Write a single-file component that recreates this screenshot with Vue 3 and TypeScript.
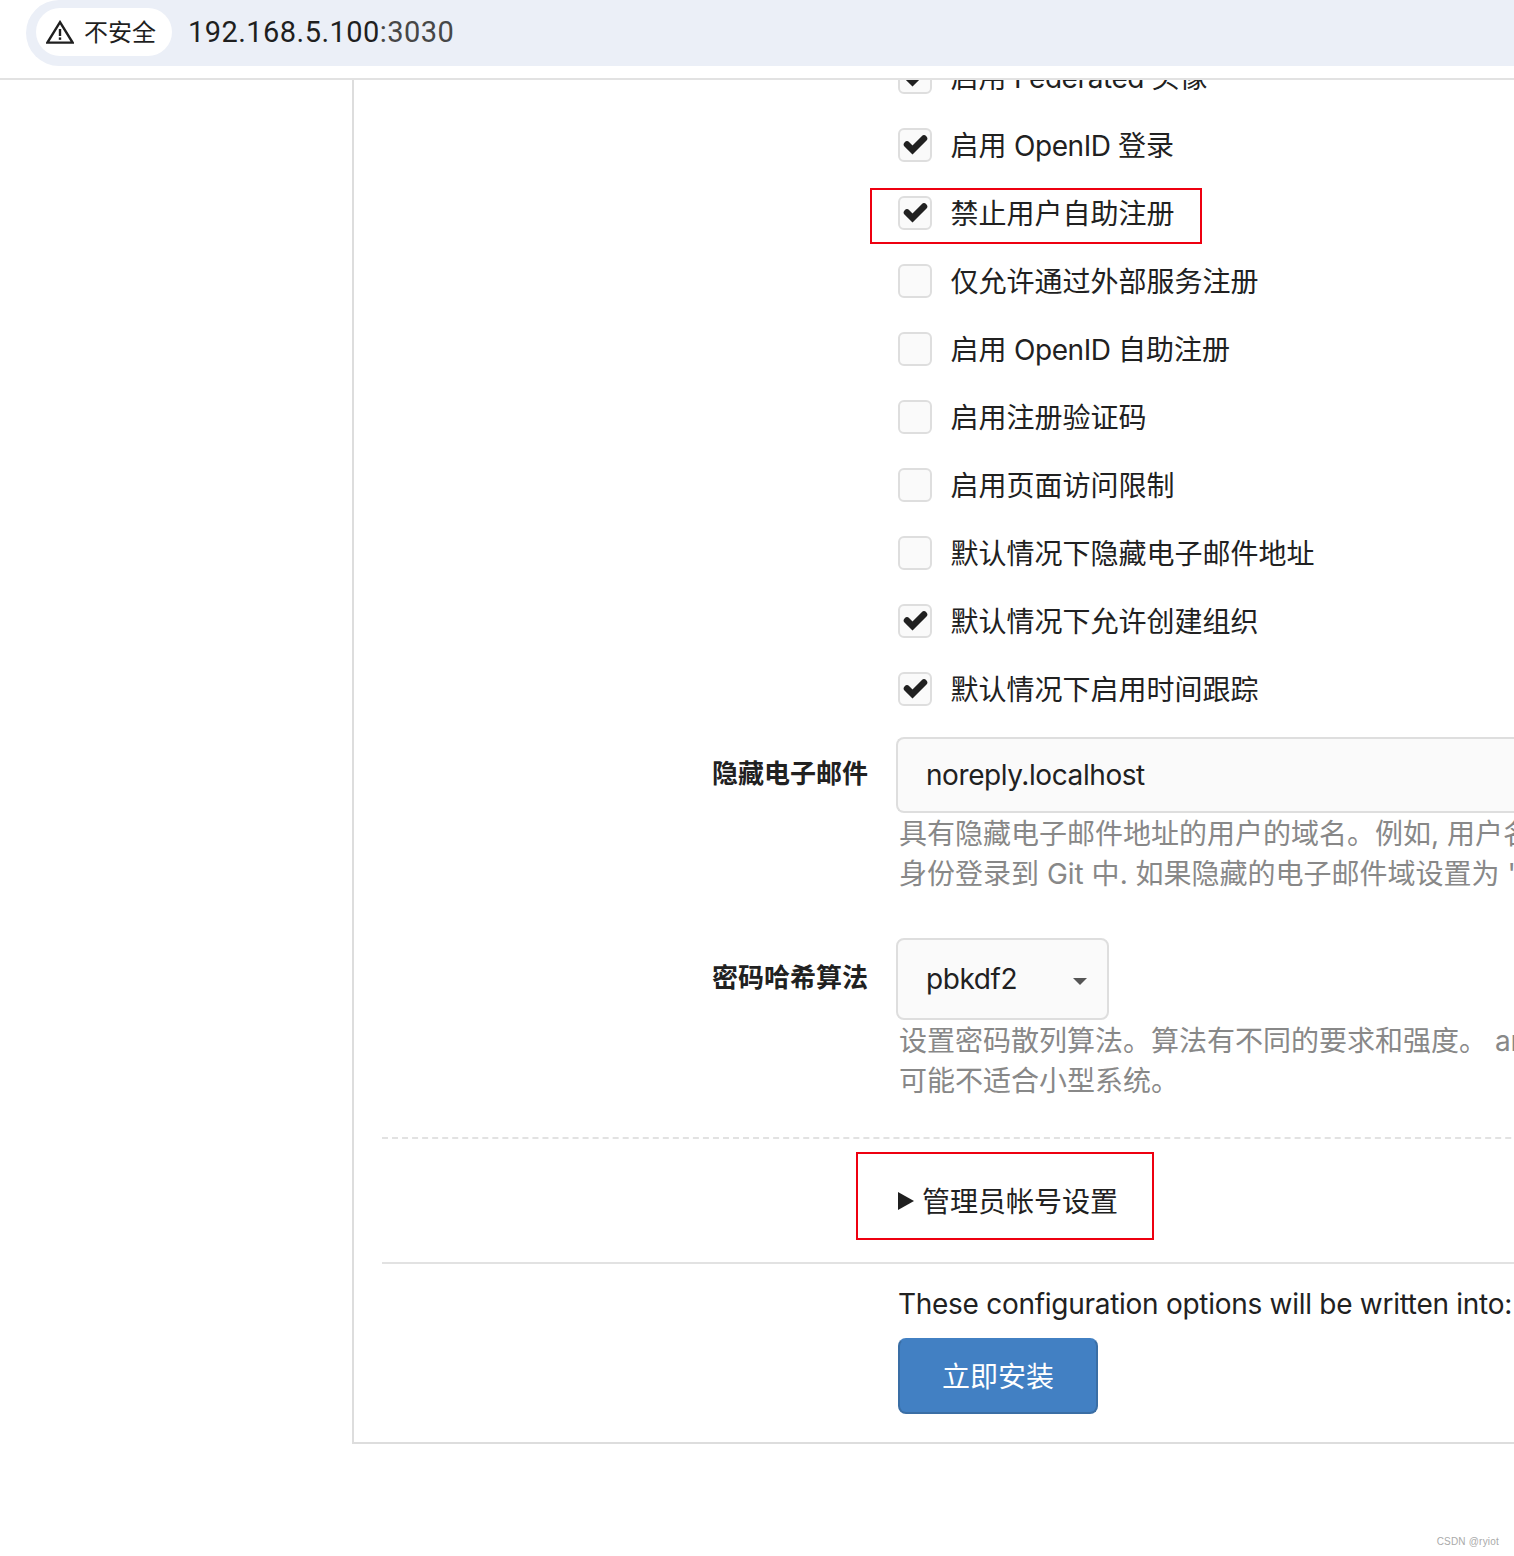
<script setup lang="ts">
interface Opcio {
  text: string;
  marcat: boolean;
  destacat?: boolean;
}

const opcions: Opcio[] = [
  { text: '启用 Federated 头像', marcat: true },
  { text: '启用 OpenID 登录', marcat: true },
  { text: '禁止用户自助注册', marcat: true, destacat: true },
  { text: '仅允许通过外部服务注册', marcat: false },
  { text: '启用 OpenID 自助注册', marcat: false },
  { text: '启用注册验证码', marcat: false },
  { text: '启用页面访问限制', marcat: false },
  { text: '默认情况下隐藏电子邮件地址', marcat: false },
  { text: '默认情况下允许创建组织', marcat: true },
  { text: '默认情况下启用时间跟踪', marcat: true },
];

// splits the label so the latin words can use their own font
function trossos(text: string): string[] {
  return text.split(/( ?[A-Za-z]+ ?)/).filter(Boolean);
}
</script>

<template>
  <div class="finestra">
    <header class="barra">
      <div class="adreca">
        <div class="avis">
          <svg width="28" height="24" viewBox="0 0 28 24" fill="none">
            <path d="M14 2.2 L26.6 22.6 H1.4 Z" stroke="#1f1f1f" stroke-width="2.4" />
            <rect x="12.8" y="9" width="2.4" height="7" fill="#1f1f1f" />
            <rect x="12.8" y="17.4" width="2.4" height="2.4" fill="#1f1f1f" />
          </svg>
          <span class="avis-text">不安全</span>
        </div>
        <div class="url">192.168.5.100<span class="url-port">:3030</span></div>
      </div>
    </header>

    <main class="pagina">
      <section class="panell">
        <div class="opcions">
          <div v-for="o in opcions" :key="o.text" class="opcio" :class="{ 'opcio--destacada': o.destacat }">
            <span class="casella">
              <svg v-if="o.marcat" width="25" height="20" viewBox="0 0 25 20">
                <path d="M4 9.5 L9.5 15 L21 3.5" fill="none" stroke="#212121" stroke-width="6.5" stroke-linecap="round" />
              </svg>
            </span>
            <span class="opcio-text">
              <template v-for="(t, i) in trossos(o.text)" :key="i">
                <span v-if="/[A-Za-z]/.test(t)" class="llati">{{ t }}</span>
                <template v-else>{{ t }}</template>
              </template>
            </span>
          </div>
        </div>

        <div class="camp camp--correu">
          <label class="etiqueta">隐藏电子邮件</label>
          <div>
            <div class="entrada llati">noreply.localhost</div>
            <p class="ajuda">具有隐藏电子邮件地址的用户的域名。例如<span class="llati">, </span>用户名<span class="llati"> 'joe' </span>将以<span class="llati"> 'joe@noreply.example.org' </span>的</p>
            <p class="ajuda">身份登录到<span class="llati"> Git </span>中<span class="llati">. </span>如果隐藏的电子邮件域设置为<span class="llati"> 'noreply.example.org'.</span></p>
          </div>
        </div>

        <div class="camp camp--hash">
          <label class="etiqueta">密码哈希算法</label>
          <div>
            <div class="selector">
              <span class="llati">pbkdf2</span>
              <i class="fletxa"></i>
            </div>
            <p class="ajuda">设置密码散列算法。算法有不同的要求和强度。<span class="llati"> argon2 </span>算法比较安全，但会占用大量内存，</p>
            <p class="ajuda">可能不适合小型系统。</p>
          </div>
        </div>

        <div class="divisor divisor--puntejat"></div>

        <details class="admin">
          <summary>
            <svg width="16" height="18" viewBox="0 0 16 18"><path d="M0 0 L16 9 L0 18 Z" fill="#1f1f1f" /></svg>
            <span class="admin-text">管理员帐号设置</span>
          </summary>
        </details>

        <div class="divisor"></div>

        <div class="peu">
          <p class="nota llati">These configuration options will be written into: /data/gitea/conf/app.ini</p>
          <button class="boto" type="button">立即安装</button>
        </div>
      </section>
    </main>

    <div class="marca">CSDN @ryiot</div>
  </div>
</template>

<style scoped>
.finestra {
  position: relative;
  width: 1514px;
  height: 1556px;
  overflow: hidden;
  background: #fff;
  color: #212121;
  font-family: "Noto Sans CJK SC", sans-serif;
  font-size: 28px;
}

.llati {
  font-family: Inter, "Noto Sans CJK SC", sans-serif;
  letter-spacing: -0.42px;
}

.barra {
  height: 78px;
  border-bottom: 2px solid #e2e2e2;
  padding-left: 26px;
  background: #fff;
}

.adreca {
  height: 66px;
  box-sizing: border-box;
  display: flex;
  align-items: flex-start;
  gap: 16px;
  padding: 8px 0 0 10px;
  background: #ebeff7;
  border-radius: 33px 0 0 33px;
}

.avis {
  height: 48px;
  width: 136px;
  box-sizing: border-box;
  padding-left: 10px;
  display: flex;
  align-items: center;
  gap: 10px;
  background: #fff;
  border-radius: 24px;
  font-size: 24px;
  color: #1f1f1f;
}

.avis-text {
  padding-bottom: 4px;
}

.url {
  font-family: Roboto, "Noto Sans", sans-serif;
  font-size: 29px;
  line-height: 48px;
  letter-spacing: 0.45px;
  color: #1f1f1f;
}

.url-port {
  color: #474747;
}

.pagina {
  height: 1364px;
  overflow: hidden;
  padding-left: 352px;
}

.panell {
  width: 1400px;
  margin-top: -37px;
  padding: 0 0 28px 28px;
  border-left: 2px solid #ddd;
  border-bottom: 2px solid #ddd;
}

.opcions {
  padding-left: 516px;
}

.opcio {
  position: relative;
  height: 68px;
  display: flex;
  align-items: center;
  gap: 18.5px;
}

.opcio-text {
  padding-bottom: 2px;
}

.opcio--destacada::after {
  content: "";
  position: absolute;
  left: -28px;
  top: 9px;
  width: 332px;
  height: 56px;
  box-sizing: border-box;
  border: 2px solid #ee0010;
}

.casella {
  width: 34px;
  height: 34px;
  flex: none;
  box-sizing: border-box;
  display: flex;
  align-items: center;
  justify-content: center;
  border: 2px solid #dedede;
  border-radius: 6px;
  background: #fafafa;
}

.camp {
  display: grid;
  grid-template-columns: 486px 1fr;
  column-gap: 28px;
}

.camp--correu {
  margin-top: 14px;
}

.camp--hash {
  margin-top: 45px;
}

.etiqueta {
  text-align: right;
  font-size: 26px;
  font-weight: 700;
  line-height: 70px;
}

.camp--hash .etiqueta {
  line-height: 76px;
}

.entrada {
  height: 76px;
  box-sizing: border-box;
  display: flex;
  align-items: center;
  padding-left: 28px;
  border: 2px solid #dedede;
  border-right: 0;
  border-radius: 8px 0 0 8px;
  background: #fafafa;
}

.selector {
  width: 213px;
  height: 82px;
  box-sizing: border-box;
  display: flex;
  align-items: center;
  justify-content: space-between;
  padding: 0 20px 0 28px;
  border: 2px solid #dedede;
  border-radius: 8px;
  background: #fafafa;
}

.fletxa {
  width: 0;
  height: 0;
  margin-top: 4px;
  border-left: 7px solid transparent;
  border-right: 7px solid transparent;
  border-top: 7px solid #555;
}

.ajuda {
  margin: 0 0 0 3px;
  height: 40px;
  line-height: 38px;
  color: #888;
  white-space: nowrap;
}

.ajuda .llati {
  letter-spacing: 0;
}

.divisor {
  height: 0;
  border-top: 2px solid #e2e2e2;
}

.divisor--puntejat {
  margin-top: 37px;
  border-top-style: dashed;
}

.admin {
  height: 123px;
  padding-left: 516px;
  box-sizing: border-box;
  position: relative;
}

.admin::after {
  content: "";
  position: absolute;
  left: 474px;
  top: 13px;
  width: 298px;
  height: 88px;
  box-sizing: border-box;
  border: 2px solid #ee0010;
}

.admin summary {
  list-style: none;
  height: 124px;
  display: flex;
  align-items: center;
  gap: 8px;
}

.admin-text {
  padding-bottom: 2px;
}

.peu {
  padding: 22px 0 0 516px;
}

.nota {
  margin: 0 0 16px;
  height: 36px;
  line-height: 36px;
  letter-spacing: -0.28px;
  white-space: nowrap;
}

.boto {
  display: block;
  width: 200px;
  height: 76px;
  padding: 0 0 2px;
  border: 2px solid #3a6ea5;
  border-top-color: #4280c3;
  border-radius: 8px;
  background: #4280c3;
  color: #fff;
  font: inherit;
}

.marca {
  position: absolute;
  right: 15px;
  top: 1536px;
  font-family: "Liberation Sans", sans-serif;
  font-size: 10px;
  line-height: 12px;
  letter-spacing: 0.2px;
  color: #aaa;
}
</style>
